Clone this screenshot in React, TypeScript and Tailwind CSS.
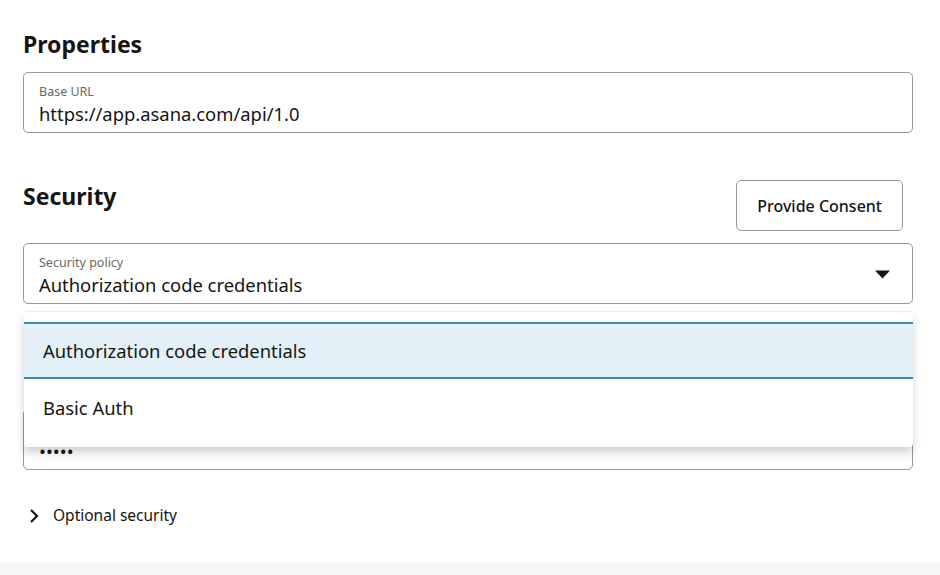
import React from 'react';

const font = { fontFamily: '"Noto Sans", "Open Sans", sans-serif' };

function Field({ label, value, children }: { label: string; value: string; children?: React.ReactNode }) {
  return (
    <div className="flex items-center h-[61px] border border-[#9a9794] rounded-[5px] bg-white pl-[15px] pr-[22px]">
      <div className="flex-1 flex flex-col pt-[3px]">
        <span className="text-[12.5px] leading-[16px] text-[#6b6865]">{label}</span>
        <span className="mt-[3px] text-[18.4px] leading-[22px] text-[#161513]">{value}</span>
      </div>
      {children}
    </div>
  );
}

export default function App() {
  return (
    <div style={font} className="w-[940px] h-[575px] overflow-hidden bg-white flex flex-col">
      <div className="pl-[23px] w-[913px] pt-[28px] flex flex-col">
        <h2 className="text-[23px] leading-[32px] font-bold text-[#161513]">Properties</h2>
        <div className="mt-[12px]">
          <Field label="Base URL" value="https://app.asana.com/api/1.0" />
        </div>

        <div className="mt-[47px] flex items-start justify-between">
          <h2 className="text-[23px] leading-[32px] font-bold text-[#161513]">Security</h2>
          <button className="mr-[10px] h-[51px] px-[20px] border border-[#9a9794] rounded-[5px] bg-white text-[16px] font-medium text-[#161513]">
            Provide Consent
          </button>
        </div>

        <div className="mt-[12px]">
          <Field label="Security policy" value="Authorization code credentials">
            <svg width="15" height="9" viewBox="0 0 15 9" className="mt-[2px]">
              <path d="M0 0.5 H15 L7.5 8.5 Z" fill="#161513" />
            </svg>
          </Field>
        </div>

        <div className="relative">
          <div className="mt-[105px]">
            <Field label="Client secret" value="•••••" />
          </div>

          <div className="absolute left-[1px] right-0 top-[7px] bg-white rounded-[4px] border-t border-[#ececec] shadow-[0_6px_10px_rgba(0,0,0,0.18)] pt-[10px] pb-[11px]">
            <div className="h-[57px] flex items-center pl-[19px] bg-[#e4f0f7] border-y-2 border-[#3e8cb3] text-[18.4px] text-[#161513]">
              Authorization code credentials
            </div>
            <div className="h-[57px] flex items-center pl-[19px] text-[18.4px] text-[#161513]">
              Basic Auth
            </div>
          </div>
        </div>

        <div className="mt-[34px] h-[24px] flex items-center gap-[14px] pl-[6px]">
          <svg width="10" height="16" viewBox="0 0 10 16">
            <path d="M2 2 L8 8 L2 14" fill="none" stroke="#161513" strokeWidth="2.2" />
          </svg>
          <span className="text-[15.5px] text-[#161513]">Optional security</span>
        </div>
      </div>
      <div className="mt-auto h-[12px] bg-[#f7f6f4]" />
    </div>
  );
}
